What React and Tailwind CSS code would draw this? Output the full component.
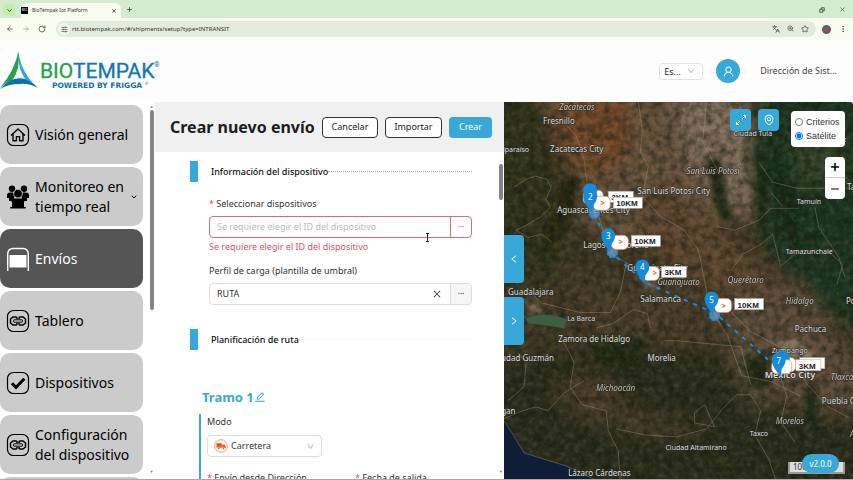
import { useState } from "react";
import { AiOutlineClose, AiOutlineDown, AiOutlineEdit, AiOutlineEnvironment, AiOutlineLeft, AiOutlineRight, AiOutlineUser } from "react-icons/ai";
import { ArrowLeft, ArrowRight, ChevronDown, Languages, Minus, MoreVertical, Plus, RotateCw, SlidersHorizontal, Star, X, ZoomIn } from "lucide-react";

const IconHome = () => (
    <svg viewBox="0 0 24 24" className="h-6 w-6 shrink-0" fill="none" stroke="currentColor" strokeWidth="1.2">
        <rect x="1.5" y="1.5" width="21" height="21" rx="6" />
        <path d="M5 12.5 12 6l7 6.5M7 11v6.8h3.4v-4.2h3.2v4.2H17V11" strokeWidth="1.4" strokeLinejoin="round" />
    </svg>
);

const IconPeople = () => (
    <svg viewBox="0 0 24 24" className="h-6 w-6 shrink-0" fill="currentColor">
        <circle cx="6" cy="3.8" r="3.2" />
        <circle cx="18" cy="3.8" r="3.2" />
        <path d="M1 13V10.5Q1 7.5 4 7.5h3l2 3-2 5.5H3V13zM23 13V10.5Q23 7.5 20 7.5h-3l-2 3 2 5.5h4V13z" />
        <circle cx="12" cy="8.6" r="4.4" stroke="#cbcbcb" strokeWidth="0.9" />
        <path d="M5 13.5h14v2.7h-1V22h1.7v1.6H4.3V22H6v-5.8H5z" />
    </svg>
);

const IconShipment = () => (
    <svg viewBox="0 0 24 24" className="h-6 w-6 shrink-0">
        <path d="M1.7 24V7Q2 1.5 7 1.5h10q5 0 5.3 5.5v17" fill="none" stroke="currentColor" strokeWidth="1.4" />
        <path d="M3.5 8h17v12.5h-17z" fill="currentColor" />
    </svg>
);

const IconLink = () => (
    <svg viewBox="0 0 24 24" className="h-6 w-6 shrink-0" fill="none" stroke="currentColor" strokeWidth="1.2">
        <rect x="1.5" y="1.5" width="21" height="21" rx="6" />
        <path d="M11 10V9Q11 8 10 8H7L4.5 10v4L7 16h3q1 0 1-1v-1M13 10V9q0-1 1-1h3l2.5 2v4L17 16h-3q-1 0-1-1v-1" strokeWidth="1.5" />
        <rect x="7.5" y="10.8" width="9" height="2.4" rx="0.6" strokeWidth="1" />
    </svg>
);

const IconCheck = () => (
    <svg viewBox="0 0 24 24" className="h-6 w-6 shrink-0" fill="none" stroke="currentColor" strokeWidth="1.2">
        <rect x="1.5" y="1.5" width="21" height="21" rx="6" />
        <path d="m6 12.3 4 4 8.3-8.6" strokeWidth="3" />
    </svg>
);

const menu = [
    { label: "Visión general", Icon: IconHome },
    { label: "Monitoreo en tiempo real", Icon: IconPeople, sub: true },
    { label: "Envíos", Icon: IconShipment, active: true },
    { label: "Tablero", Icon: IconLink },
    { label: "Dispositivos", Icon: IconCheck },
    { label: "Configuración del dispositivo", Icon: IconLink },
];

function Browser() {
    return (
        <div className="shrink-0 text-[#333]">
            <div className="flex h-[18px] items-end bg-[#d3ebce] pl-[3px] pr-[7px]">
                <button aria-label="Buscar pestañas" className="mb-[2px] flex h-3 w-3 items-center justify-center rounded bg-[#bff0a8]">
                    <ChevronDown size={7} strokeWidth={3} />
                </button>
                <div className="ml-[6px] flex h-[15px] w-[100px] items-center rounded-t-md bg-[#f8fdf0]">
                    <span className="flex h-[7px] w-[7px] items-center justify-center bg-black text-[3px] text-white">BIO</span>
                    <span className="ml-1 flex-1 text-[5px]">BioTempak Iot Platform</span>
                    <button aria-label="Cerrar pestaña" className="mr-1"><X size={6} strokeWidth={3} /></button>
                </div>
                <button aria-label="Nueva pestaña" className="mb-[5px] ml-[5px]"><Plus size={7} strokeWidth={2.5} /></button>
                <div className="mb-[5px] ml-auto flex items-center gap-[14px]">
                    <svg viewBox="0 0 8 8" className="h-[6px] w-[6px]" fill="none" stroke="currentColor"><path d="M1 3h4v4H1zM3 3V1h4v4H5" /></svg>
                    <X size={7} strokeWidth={2} />
                </div>
            </div>
            <div className="flex h-[22px] items-center bg-[#f8fdf0] pl-[6px] pr-[6px]">
                <button aria-label="Atrás"><ArrowLeft size={8} /></button>
                <button aria-label="Adelante" className="ml-2 text-[#999]"><ArrowRight size={8} /></button>
                <button aria-label="Recargar" className="ml-2"><RotateCw size={8} /></button>
                <div className="ml-[10px] flex h-4 flex-1 items-center rounded-full bg-[#e2ecdc] pl-[2px] pr-[7px]">
                    <span className="mr-[2px] flex h-3 w-3 items-center justify-center rounded-full bg-[#f3f8ee]"><SlidersHorizontal size={7} /></span>
                    <span className="text-[6px]">rtt.biotempak.com/#/shipments/setup?type=INTRANSIT</span>
                    <span className="ml-auto flex gap-[7px]">
                        <Languages size={8} />
                        <ZoomIn size={7} />
                        <Star size={8} />
                    </span>
                </div>
                <span className="ml-[6px] h-[9px] w-[9px] rounded-full border-2 border-[#26766c] bg-[#ee2850]"></span>
                <MoreVertical size={8} className="ml-2" />
            </div>
        </div>
    );
}

function Header() {
    return (
        <header className="flex h-[62px] shrink-0 items-center bg-[#fdfdfd]">
            <svg viewBox="0 0 162 42" className="h-[42px] w-[162px]" role="img" aria-label="Biotempak">
                <path d="M18.5 1Q15 20 0 38q6-6 12-7Q21 18 18.500 1Z" fill="#25a24b" />
                <path d="M18.5 3Q17 18 27 32q7 2 13 8Q22 25 18.500 3Z" fill="#2ba6de" />
                <path d="M0 39Q19 18 38 38 28 33 20 34 8 34 0 39Z" fill="#0b70b0" />
                <text x="40" y="28" fontFamily="Roboto, sans-serif" fontSize="21" fontWeight="400" fill="#0f78b5" stroke="#0f78b5" strokeWidth="0.3">
                    <tspan fill="#25a24b" stroke="#25a24b">BIO</tspan>TEMPAK
                </text>
                <text x="154" y="17" fontFamily="Roboto, sans-serif" fontSize="7" fill="#0f78b5">®</text>
                <text x="52" y="38" fontFamily="DejaVu Sans, sans-serif" fontSize="7.5" fontWeight="700" fill="#0f70ad">POWERED BY FRIGGA</text>
                <text x="145" y="35" fontFamily="Roboto, sans-serif" fontSize="4" fill="#0f70ad">®</text>
            </svg>
            <div className="ml-auto flex items-center pr-4">
                <div className="relative flex">
                    <select aria-label="Idioma" className="h-[17px] w-11 appearance-none rounded border border-[#e2e2e2] bg-white pl-1 text-[9px] leading-none">
                        <option>Es...</option>
                    </select>
                    <AiOutlineDown size={8} className="pointer-events-none absolute right-2 top-1 text-[#aaa]" />
                </div>
                <button aria-label="Cuenta" className="ml-[13px] flex h-6 w-6 items-center justify-center rounded-full bg-[#38a8d8] text-white">
                    <AiOutlineUser size={13} />
                </button>
                <span className="ml-5 text-[9px] text-[#444]">Dirección de Sist...</span>
            </div>
        </header>
    );
}

function Sidebar() {
    return (
        <aside className="flex w-[155px] shrink-0 justify-between overflow-hidden bg-white">
            <nav className="flex w-[143px] flex-col gap-[3px] pt-[3px]">
                {menu.map(({ label, Icon, active, sub }) => (
                    <a
                        key={label}
                        href="#"
                        className={`flex h-[59px] shrink-0 items-center rounded-[10px] pl-[6px] text-[14px] leading-5 ${active ? "bg-[#555] text-white" : "bg-[#cbcbcb] text-black"}`}
                    >
                        <Icon />
                        <span className="ml-[5px] flex-1">{label}</span>
                        {sub ? <ChevronDown size={8} strokeWidth={3} className="mr-[5px] shrink-0" /> : null}
                    </a>
                ))}
                <div className="h-[59px] shrink-0 rounded-[10px] bg-[#cbcbcb]"></div>
            </nav>
            <div className="flex w-[7px] flex-col items-center justify-between pb-1 pt-[2px] text-[4px] leading-[6px] text-[#777]">
                <span>▲</span>
                <div className="mb-auto h-[200px] w-1 rounded bg-[#858585]"></div>
                <span>▼</span>
            </div>
        </aside>
    );
}

function Section({ title, line }) {
    return (
        <div className="flex h-[21px] items-center">
            <span className="h-[21px] w-2 bg-[#38a8d8]"></span>
            <h2 className="ml-[13px] text-[9px] font-medium text-[#111]">{title}</h2>
            <span className={`flex-1 border-t border-dotted ${line}`}></span>
        </div>
    );
}

function ShipmentForm() {
    const [device, setDevice] = useState("");
    const [profile, setProfile] = useState("RUTA");

    return (
        <main className="flex min-w-0 flex-1 flex-col overflow-hidden bg-white">
            <div className="flex h-[50px] shrink-0 items-center gap-[7px] bg-[#f0f0f0] pl-[15px] pr-3">
                <h1 className="mr-auto whitespace-nowrap text-[16px] font-bold text-[#1d1d1d]">Crear nuevo envío</h1>
                <button className="h-[21px] w-14 rounded border border-[#333] bg-white text-[9px]">Cancelar</button>
                <button className="h-[21px] w-[57px] rounded border border-[#333] bg-white text-[9px]">Importar</button>
                <button className="h-[21px] w-[43px] rounded bg-[#38a8d8] text-[9px] text-white">Crear</button>
            </div>
            <div className="flex min-h-0 flex-1">
                <form className="min-w-0 flex-1 overflow-hidden pl-[35px] pt-[9px] text-[9px] text-[#333]">
                    <div className="pr-[26px]">
                        <Section title="Información del dispositivo" line="border-[#aaa]" />
                        <div className="pl-[19px]">
                            <label htmlFor="device" className="mt-[14px] block leading-4"><span className="text-[#e0525a]">*</span> Seleccionar dispositivos</label>
                            <div className="relative mt-1 flex h-[22px] rounded border border-[#dc6b73]">
                                <input
                                    id="device"
                                    value={device}
                                    onChange={(e) => setDevice(e.target.value)}
                                    placeholder="Se requiere elegir el ID del dispositivo"
                                    className="min-w-0 flex-1 px-[7px] outline-none placeholder:text-[#bbb]"
                                />
                                <button type="button" aria-label="Elegir dispositivo" className="w-[21px] border-l border-[#dc6b73] text-[8px] text-[#d64550]">···</button>
                                <svg viewBox="0 0 5 9" className="absolute -bottom-[5px] right-[41px] h-[9px] w-[5px]" fill="none" stroke="#222">
                                    <path d="M1 .5h3M2.5 1v7M1 8.5h3" />
                                </svg>
                            </div>
                            <p className="leading-[17px] text-[#e0525a]">Se requiere elegir el ID del dispositivo</p>
                            <label htmlFor="profile" className="mt-2 block leading-4">Perfil de carga (plantilla de umbral)</label>
                            <div className="mt-1 flex h-[22px] items-center rounded border border-[#ddd]">
                                <input
                                    id="profile"
                                    value={profile}
                                    onChange={(e) => setProfile(e.target.value)}
                                    className="min-w-0 flex-1 px-[7px] outline-none"
                                />
                                <button type="button" aria-label="Borrar" onClick={() => setProfile("")} className="mr-2"><AiOutlineClose size={10} /></button>
                                <button type="button" aria-label="Elegir perfil" className="h-full w-[21px] rounded-r border-l border-[#ddd] bg-[#f6f6f6] text-[8px]">···</button>
                            </div>
                        </div>
                        <div className="mt-6">
                            <Section title="Planificación de ruta" line="border-[#eee]" />
                        </div>
                    </div>
                    <h3 className="ml-3 mt-[35px] flex items-center text-[13px] font-bold leading-6 text-[#38a8d8]">
                        Tramo 1
                        <button type="button" aria-label="Editar tramo"><AiOutlineEdit size={12} /></button>
                    </h3>
                    <div className="ml-[9px] mt-[5px] h-24 border-l-2 border-[#38a8d8] pl-[6px]">
                        <label htmlFor="mode" className="block leading-4">Modo</label>
                        <div className="relative mt-[5px] flex w-[115px]">
                            <select id="mode" className="h-[22px] w-full appearance-none rounded border border-[#ddd] bg-white pl-[23px]">
                                <option>Carretera</option>
                            </select>
                            <svg viewBox="0 0 14 14" className="pointer-events-none absolute left-[7px] top-1 h-[14px] w-[14px]">
                                <circle cx="7" cy="7" r="6.3" fill="#fff" stroke="#e58a5f" strokeWidth="0.8" />
                                <path d="M2.5 4.2h5.3v4.5H2.5zM8.2 5.5h2.2l1.3 1.7v1.9H8.2z" fill="#e8530e" />
                                <circle cx="4.5" cy="9.3" r="1.1" fill="#e8530e" stroke="#fff" strokeWidth="0.4" />
                                <circle cx="9.5" cy="9.3" r="1.1" fill="#e8530e" stroke="#fff" strokeWidth="0.4" />
                            </svg>
                            <AiOutlineDown size={9} className="pointer-events-none absolute right-[7px] top-[7px] text-[#aaa]" />
                        </div>
                        <div className="mt-3 flex leading-[18px]">
                            <span className="w-[148px]"><span className="text-[#e0525a]">*</span> Envío desde Dirección</span>
                            <span><span className="text-[#e0525a]">*</span> Fecha de salida</span>
                        </div>
                    </div>
                </form>
                <div className="flex w-[6px] flex-col items-center justify-between pb-1 pt-3 text-[4px] leading-[6px] text-[#777]">
                    <div className="h-9 w-1 rounded bg-[#858585]"></div>
                    <span>▼</span>
                </div>
            </div>
        </main>
    );
}

// x, y, size, italic
const places = [
    ["Zacatecas", 55, 8, 8, true],
    ["Fresnillo", 39, 22, 8],
    ["Valparaíso", -9, 50, 7],
    ["Zacatecas City", 46, 50, 8],
    ["Aguascalientes City", 53, 111, 8],
    ["San Luis Potosi City", 133, 92, 8],
    ["San Luis Potosí", 182, 72, 8, true],
    ["Ciudad Tula", 229, 34, 7],
    ["Ciudad Valdez", 295, 40, 7],
    ["Tamuín", 292, 102, 7],
    ["Tampico", 342, 88, 8],
    ["Tamazunchale", 281, 152, 7],
    ["Lagos de Moreno", 79, 146, 8],
    ["Guanajuato City", 123, 169, 8],
    ["Guanajuato", 153, 183, 8, true],
    ["Querétaro", 223, 181, 8, true],
    ["Guadalajara", 4, 192, 8],
    ["Salamanca", 136, 199, 8],
    ["La Barca", 63, 218, 7],
    ["Zamora de Hidalgo", 54, 239, 8],
    ["Ciudad Guzmán", -10, 258, 8],
    ["Morelia", 143, 258, 8],
    ["Michoacán", 92, 288, 8, true],
    ["Hidalgo", 281, 201, 8, true],
    ["Poza Rica", 341, 201, 8],
    ["Pachuca", 290, 229, 8],
    ["Zumpango", 267, 250, 7],
    ["Mexico City", 260, 275, 9],
    ["Tlaxcala", 326, 277, 8, true],
    ["Puebla City", 317, 301, 8],
    ["Morelos", 271, 321, 8, true],
    ["Taxco", 245, 333, 7],
    ["Ciudad Altamirano", 161, 347, 7],
    ["Apatzingan", -31, 311, 8],
    ["Lázaro Cárdenas", 64, 373, 8],
    ["Acatlán", 345, 334, 8, true],
];

// card and label sit to the right of the pin
const stops = [
    { n: "", x: 86, y: 90, text: "3KM", lx: 104, ly: 89 },
    { n: "2", x: 86, y: 96, text: "10KM", lx: 109, ly: 95, card: 89, tx: 89 },
    { n: "3", x: 104, y: 135, text: "10KM", lx: 127, ly: 133, card: 107, tx: 107 },
    { n: "4", x: 138, y: 166, text: "3KM", lx: 157, ly: 164, card: 138 },
    { n: "5", x: 207, y: 198, text: "10KM", lx: 230, ly: 196, card: 210, tx: 209 },
    { n: "", x: 278, y: 257, text: "", lx: 295, ly: 255 },
    { n: "7", x: 274, y: 259, text: "3KM", lx: 291, ly: 257 },
];

function MapCanvas() {
    return (
        <svg viewBox="0 0 349 376" preserveAspectRatio="xMinYMin slice" className="h-full w-full" fontFamily="'Noto Sans', sans-serif">
            <defs>
                <filter id="soft" x="-30%" y="-30%" width="160%" height="160%"><feGaussianBlur stdDeviation="9" /></filter>
                <filter id="soft2" x="-30%" y="-30%" width="160%" height="160%"><feGaussianBlur stdDeviation="3" /></filter>
                <filter id="grain" x="0" y="0" width="100%" height="100%" colorInterpolationFilters="sRGB">
                    <feTurbulence type="fractalNoise" baseFrequency="0.13" numOctaves="5" seed="8" />
                    <feColorMatrix values="0 0 0 0 0.06  0 0 0 0 0.08  0 0 0 0 0.04  1.8 0 0 0 -0.6" />
                </filter>
                <filter id="light" x="0" y="0" width="100%" height="100%" colorInterpolationFilters="sRGB">
                    <feTurbulence type="fractalNoise" baseFrequency="0.2" numOctaves="4" seed="21" />
                    <feColorMatrix values="0 0 0 0 0.6  0 0 0 0 0.52  0 0 0 0 0.4  0 2 0 0 -0.8" />
                </filter>
            </defs>
            <rect width="349" height="376" fill="#433a25" />
            <g filter="url(#soft)">
                <path d="M40-20h200l14 80-20 60-50 30-84-10-40-50-30-40Z" fill="#6c5640" />
                <path d="M50-10h80l-4 60-36 30-36-30Z" fill="#754b2b" />
                <path d="M170 0l60-10 28 50 0 70-24 4-44-50Z" fill="#85725e" />
                <path d="M110 90l60 0 70 60 60 50-60 10-90-60Z" fill="#624a33" />
                <path d="M-20-20h52l34 90-10 100-76 20Z" fill="#33341d" />
                <path d="M248-20h130v260l-50-25-64-60-20-75Z" fill="#1f3822" />
                <path d="M290 30h50v50h-50Z" fill="#364529" />
                <path d="M218 190l80-10 30 50 34 50v30l-70-10-60-40Z" fill="#5f4f3a" />
                <path d="M60 180l150 0 20 50-120 10Z" fill="#4c3f2a" />
                <path d="M-10 256l100-6 140 0 20 56 119 20v70H-10Z" fill="#2b2e1f" />
                <path d="M45 290l50-30 30 46 80 20-50 10-80-20Z" fill="#483c29" />
                <path d="M220 250l50-5 20 30-40 30Z" fill="#5d503e" />
            </g>
            <g filter="url(#soft2)">
                <path d="M250 20l12 50 0 70-8-20ZM264 40l24 60 10 60-20-40ZM278 60l14 30 4 30-12-30Z" fill="#132a14" />
                <path d="M64 70l12 4-4 30-25 40-9 4 16-50Z" fill="#26260f" />
                <path d="M200 55l16 0 8 50 10 20-20-10ZM85 236l55 0-5 34-42-6ZM240 255l24-4 0 34-20 0Z" fill="#222a16" />
                <path d="M272 236l24 0 14 18-10 10-20-4ZM128 168l26 15-3 8ZM20 196l20 10-10 8Z" fill="#8b7a64" />
                <path d="M302 280l8 0 4 50-12-10Z" fill="#1e2a15" />
            </g>
            <rect width="349" height="376" filter="url(#light)" opacity="0.22" />
            <rect width="349" height="376" filter="url(#grain)" opacity="0.6" />
            <path d="M0 318 8 330 20 350 62 363 80 372 90 376H0Z" fill="#101d36" />
            <path d="M22 216q18-8 41 1l-3 9q-18-4-36-5Z" fill="#3c5f42" />
            <g fill="none" stroke="#b0a688" strokeWidth="0.7" opacity="0.5" strokeLinejoin="round">
                <path d="M10 85l12-8 9-3 12 3 4 8-5 12 4 8-10 10-14 8-10 5 12 7 14-3 10 8M60 20l12 14 8 24 4 32 10 22 8 28 12 18M104 150l28 16 20 14" />
                <path d="M134 0l4 28-2 22 8 14-6 30 18 20 24 14 14 20 10 50 12 24" />
                <path d="M14 250l8 10-2 24-16 14M0 316l18-8 14-4 12 4 16-18 20-12M60 240l10 20-4 24 12 18 24 6 2 20 10 20 2 34-10 18M112 326l28 6 32 2 30-8 16-20 14-14 14 0 10 16-6 24 14 24 8 24" />
                <path d="M202 0l-4 40 16 30M212 124l18 4 24-10 12-12 28 0M266 90l12 14M254 60l14 20 24 6 57 0M228 166l10-14 18-10 12-10 8 32 16-14 30-2 16 14-6 20" />
                <path d="M160 238l12 0 20 2 44 4 10 38M222 205l24 24 34 18 22 34 20 22 22 12M209 211l14 22 14 40 30 6 28 14M310 105l4 20 20 30 6 20" />
                <path d="M0 205l22 10M22 184l14 16 40 10 30 0 10-20 6-30M93 225l16-4 20-14 14 4 3 14M276 275l6 18-6 26 14 20M190 320l20 4-10-22-10 8z" />
            </g>
            <path d="M0 318 8 330 20 350 62 363 80 372 90 376" fill="none" stroke="#65685a" strokeWidth="0.7" />
            <g fill="#dddddb" stroke="#292a25" strokeWidth="1" paintOrder="stroke">
                {places.map(([name, x, y, size, italic]) => (
                    <text key={name} x={x} y={y} fontSize={size} fontWeight={size === 9 ? 600 : 400} fontStyle={italic ? "italic" : "normal"} opacity={italic ? 0.8 : 1}>{name}</text>
                ))}
            </g>
            <polyline points="90,111 107,150 141,180 211,211 276,268" fill="none" stroke="#1e88e5" strokeWidth="2" strokeDasharray="4 6" />
            {stops.map((s, i) => (
                <g key={i}>
                    {s.tx ? <circle cx={s.tx + 1} cy={s.y + 15} r="5" fill="#6e9fd0" fillOpacity="0.7" stroke="#1e88e5" strokeWidth="1.5" strokeDasharray="3 1" /> : null}
                    <rect x={s.card || s.x - 7} y={s.y - 2} width={s.card ? 17 : 20} height="14" rx="5" fill="#fff" stroke="#df8a5a" strokeWidth="0.7" />
                    <rect x={s.lx} y={s.ly} width={s.text === "10KM" ? 29 : 25} height="11" fill="#fff" stroke="#aaa" strokeWidth="0.5" />
                    <text x={s.lx + 3} y={s.ly + 9} fontSize="8" fontWeight="700" fontFamily="'Liberation Sans', sans-serif" fill="#222">{s.text}</text>
                    {s.card ? <text x={s.x + 10} y={s.y + 8} fontSize="8" fontWeight="700" fill="#e06a26">&gt;</text> : null}
                    <path d={`M${s.x} ${s.y - 9}a7 7 0 0 1 7 7q0 4-4 9l-1 8-6-8q-3-5-3-9a7 7 0 0 1 7-7Z`} fill="#168bd8" />
                    <text x={s.x} y={s.y + 2} fontSize="8" textAnchor="middle" fill="#fff">{s.n}</text>
                </g>
            ))}
        </svg>
    );
}

function MapPanel() {
    const [layer, setLayer] = useState("satelite");

    return (
        <section className="relative min-w-0 flex-1 overflow-hidden rounded-tr bg-[#25291a]">
            <MapCanvas />
            <button aria-label="Contraer" className="absolute left-0 top-[133px] flex h-12 w-5 items-center justify-center rounded-r bg-[#38a8d8] text-white"><AiOutlineLeft size={10} /></button>
            <button aria-label="Expandir" className="absolute left-0 top-[195px] flex h-12 w-5 items-center justify-center rounded-r bg-[#38a8d8] text-white"><AiOutlineRight size={10} /></button>
            <div className="absolute right-2 top-[7px] flex items-start">
                <button aria-label="Pantalla completa" className="mr-[7px] flex h-[22px] w-[21px] items-center justify-center rounded bg-[#38a8d8] text-white">
                    <svg viewBox="0 0 12 12" className="h-3 w-3" fill="none" stroke="currentColor"><path d="M8 1.5h2.500v2.500M10.500 1.500 7 5M4 10.500h-2.500v-2.500M1.500 10.500 5 7" /></svg>
                </button>
                <button aria-label="Ubicación" className="mr-3 flex h-[22px] w-[21px] items-center justify-center rounded bg-[#38a8d8] text-white"><AiOutlineEnvironment size={12} /></button>
                <div className="flex flex-col items-end gap-[10px] pt-[2px]">
                    <div role="radiogroup" aria-label="Capa" className="flex h-9 w-[54px] flex-col justify-center gap-[3px] rounded-sm bg-white pl-1 font-['Liberation_Sans',sans-serif] text-[9px] leading-[11px] text-[#333]">
                        <label className="flex items-center gap-[3px]">
                            <input type="radio" name="layer" className="h-2 w-2" checked={layer === "criterios"} onChange={() => setLayer("criterios")} />Criterios
                        </label>
                        <label className="flex items-center gap-[3px]">
                            <input type="radio" name="layer" className="h-2 w-2" checked={layer === "satelite"} onChange={() => setLayer("satelite")} />Satélite
                        </label>
                    </div>
                    <div className="w-5 divide-y divide-[#ccc] rounded-sm bg-white text-black">
                        <button aria-label="Acercar" className="flex h-[21px] w-full items-center justify-center"><Plus size={12} strokeWidth={3} /></button>
                        <button aria-label="Alejar" className="flex h-[21px] w-full items-center justify-center"><Minus size={12} strokeWidth={2} /></button>
                    </div>
                </div>
            </div>
            <div className="absolute bottom-[5px] right-2 h-3 w-[57px] border-2 border-t-0 border-[#999] bg-[#ddd] pl-[3px] text-[8px] leading-[10px] text-[#333]">100 km</div>
            <span className="absolute bottom-[6px] right-[14px] flex h-[19px] w-[37px] items-center justify-center rounded-full bg-[#38a8d8] text-[8px] text-white">v2.0.0</span>
        </section>
    );
}

export default function App() {
    return (
        <div className="flex h-screen flex-col overflow-hidden bg-white font-['Noto_Sans',sans-serif] text-[#222]">
            <Browser />
            <Header />
            <div className="flex min-h-0 flex-1 border-b border-[#aaa]">
                <Sidebar />
                <ShipmentForm />
                <MapPanel />
            </div>
        </div>
    );
}
